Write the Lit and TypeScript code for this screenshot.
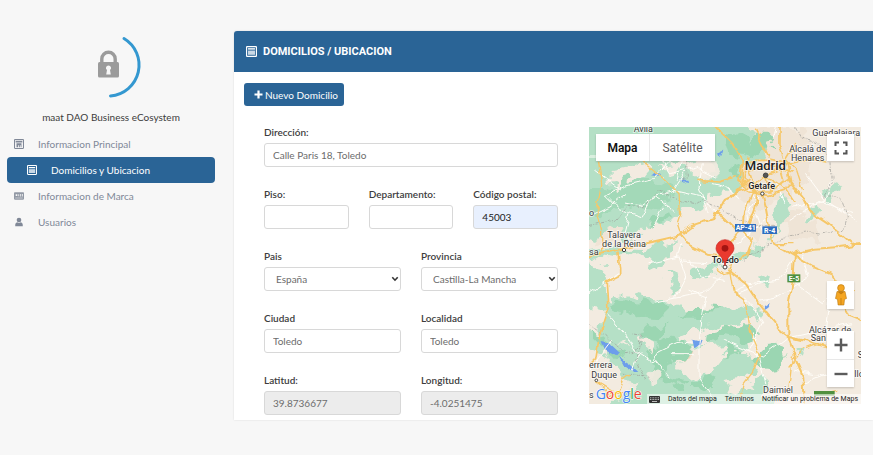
import { LitElement, html, css, svg } from "lit";
import { customElement } from "lit/decorators.js";

const listIcon = svg`<rect x="0.6" y="0.6" width="10.8" height="10.8" rx="1" fill="none" stroke="currentColor" stroke-width="1.3"/><rect x="2.2" y="2.4" width="7.6" height="1.5" fill="currentColor"/><rect x="2.2" y="5" width="7.6" height="4.6" fill="currentColor" opacity=".75"/>`;

const icons: Record<string, unknown> = {
  calendar: svg`<rect x="0.6" y="0.6" width="10.8" height="10.8" rx="1" fill="none" stroke="currentColor" stroke-width="1.3"/><path d="M2 2.2h8v2H2zM3 5h6v5H8V7.500H7V10H6V7.500H5V10H3z" fill="currentColor"/>`,
  list: listIcon,
  card: svg`<rect x="0" y="1.600" width="12" height="8.800" rx="1" fill="currentColor" opacity=".85"/><path d="M2 4h2v2H2zM5.200 4h1v2.400h-1zM7.500 3.500h1v3h-1zM9.500 3.500h1v3h-1zM1.500 8h9v.8h-9z" fill="#f7f7f7"/>`,
  user: svg`<circle cx="6" cy="3.600" r="2.800" fill="currentColor"/><path d="M1.500 11.200V9.400C1.500 7.400 3 6.300 4 6.300c1 .9 3 .9 4 0 1 0 2.500 1.100 2.500 3.100v1.800z" fill="currentColor"/>`,
};

@customElement("side-nav")
class SideNav extends LitElement {
  static styles = css`
    :host { display: block; color: #808897; }
    .brand { display: flex; flex-direction: column; align-items: center; margin: 0; color: #3c3c3c; }
    .logo { width: 68px; height: 68px; display: block; }
    .name { margin: 10px 0 0; line-height: 16px; font-size: 10px; }
    .list { list-style: none; margin: 6px 0 0; padding: 0; }
    .link { display: flex; align-items: center; gap: 14px; height: 26px; padding: 0 7px; border-radius: 4px; color: inherit; text-decoration: none; font-size: 10px; }
    .active { background: #2a6496; color: #fff; padding: 0 20px; }
    .icon { width: 10px; height: 10px; flex: none; }
  `;
  items = [
    { icon: "calendar", text: "Informacion Principal" },
    { icon: "list", text: "Domicilios y Ubicacion", active: true },
    { icon: "card", text: "Informacion de Marca" },
    { icon: "user", text: "Usuarios" },
  ];
  render() {
    return html`
      <div class="brand">
        <svg class="logo" viewBox="0 0 68 68" aria-hidden="true">
          <path d="M47 7.500A31 31 0 0 1 33.500 65" fill="none" stroke="#3498d0" stroke-width="3" stroke-linecap="round"/>
          <path d="M24.800 32v-4a6.700 6.700 0 0 1 13.400 0v4" fill="none" stroke="#9b9b9b" stroke-width="3.400"/>
          <rect x="21" y="31" width="21" height="15.500" rx="1.500" fill="#9b9b9b"/>
          <path d="M31.500 34.400a2.600 2.600 0 0 1 1.500 4.700l.8 4.500h-4.600l.8-4.500a2.600 2.600 0 0 1 1.500-4.700z" fill="#f7f7f7"/>
        </svg>
        <p class="name">maat DAO Business eCosystem</p>
      </div>
      <ul class="list">
        ${this.items.map(
          (i) => html`<li><a href="#" class="link ${i.active ? "active" : ""}">
            <svg class="icon" viewBox="0 0 12 12" aria-hidden="true">${icons[i.icon]}</svg>${i.text}</a></li>`
        )}
      </ul>
    `;
  }
}

@customElement("location-map")
class LocationMap extends LitElement {
  static styles = css`
    :host { display: block; position: relative; font-family: Roboto, "Liberation Sans", sans-serif; color: #333; overflow: hidden; }
    .canvas { display: block; width: 100%; height: 277px; }
    .place { fill: #3a3a3a; stroke: #fff; stroke-opacity: .7; stroke-width: 5px; paint-order: stroke; font-size: 27px; }
    .mid { text-anchor: middle; }
    .big { font-size: 39px; font-weight: 500; fill: #222; }
    .strong { font-weight: 500; fill: #222; }
    .shield { font-size: 21px; font-weight: 700; fill: #fff; text-anchor: middle; }
    .google { font-family: "Open Sans", sans-serif; font-size: 42px; font-weight: 500; stroke: #fff; stroke-width: 3px; paint-order: stroke; }
    button { border: 0; margin: 0; padding: 0; background: #fff; color: #5a5a5a; font-family: inherit; display: flex; align-items: center; justify-content: center; }
    .types, .full, .man, .zoom, .legal { position: absolute; }
    .types { left: 7px; top: 7px; display: flex; height: 27px; box-shadow: 0 1px 2px #0003; }
    .type { font-size: 12px; width: 65px; }
    .selected { font-weight: 600; color: #111; width: 54px; border-right: 1px solid #e8e8e8; }
    .full, .man, .zoom { right: 7px; width: 27px; box-shadow: 0 1px 2px #0003; }
    .full { top: 7px; height: 27px; }
    .man { top: 154px; height: 28px; }
    .zoom { top: 204px; background: #fff; }
    .step { width: 27px; height: 28px; }
    .step + .step { border-top: 1px solid #e8e8e8; }
    .glyph { width: 16px; height: 16px; }
    .person { width: 14px; height: 22px; }
    .legal { right: 0; bottom: 0; display: flex; gap: 8px; align-items: center; height: 10px; padding: 0 3px 0 2px; font-size: 7px; background: #ffffff8c; white-space: nowrap; }
    .legal a { color: #222; text-decoration: none; }
    .keys { width: 11px; height: 7px; }
  `;
  render() {
    return html`
      <svg class="canvas" viewBox="0 0 816 831" preserveAspectRatio="xMidYMid slice" role="img" aria-label="Mapa de Toledo">
        <defs>
          <filter id="coast" x="-5%" y="-5%" width="110%" height="110%"><feTurbulence type="fractalNoise" baseFrequency=".022" numOctaves="3" seed="4"/><feDisplacementMap in="SourceGraphic" scale="64" xChannelSelector="R" yChannelSelector="G"/></filter>
          <filter id="bend" x="-5%" y="-5%" width="110%" height="110%"><feTurbulence type="fractalNoise" baseFrequency=".03" numOctaves="2" seed="9"/><feDisplacementMap in="SourceGraphic" scale="20" xChannelSelector="R" yChannelSelector="G"/></filter>
        </defs>
        <rect width="816" height="831" fill="#f3ebe0"/>
        <g filter="url(#coast)">
        <g fill="#ede0cf">
          <path d="M470 10l60-10h110l30 90-60 120-90 30-80-30-20-110zM560 240l120 40 30 70-90-10zM500 270l30 40-10 40-60-20zM60 260l70 10-30 60-90 20z" opacity=".6"/>
          <path d="M255 670l50 0-4 24-36 8-14-18zM410 185l26-5 8 16-20 18z" fill="#f0d8bd"/>
        </g>
        <g fill="#b5e0c6">
          <path d="M-30 -30H385L400 80 470 110 440 150 470 180 430 210 400 190 350 200 330 260 270 250 250 290 170 290 130 330 80 300 20 330 -30 320z"/>
          <path d="M350-30h110l30 70 60 20-20 40-60 20-40 50-30-30 10-40-40-30z"/>
          <path d="M-30 375l80-15 100 10 120-20-20 35-90 5-40-10-60 25-60-12z"/>
          <path d="M-30 400l70 16 20 40-10 40 20 20-8 50-30-18-62-8z"/>
          <path d="M45 520l60-22 90 20 90 20 60 35 70-42 90 20-30 35-70 15-40-8-60 22-40 10 5 20 80 15 20-35 90-10 20 40-40 32-80-18-70 10-30 40-70-2-90-65-65-20z"/>
          <path d="M-30 600l90 30 60 40 60-10 20 50 60-10 60 20 50 50 40 30 60-20 60 12 40 60H60l60-80-50-80-100-40z"/>
          <path d="M410 690l60-10 40 25-10 40-80 20-30 40 60 50H320l40-100z"/>
          <path d="M300 425l40-10 60-8-20 32-70 20zM230 445l30-8 10 50-30 20zM175 385l40-4 20 24-40 20zM570 195l40 30-20 60-60 80-50 20-60 30 10-25 120-50 10-60zM735 155l30 20-40 50-20-10z"/>
          <path d="M640 240l35-10 5 30-20 16zM500 545l30 5-20 25-15-8zM508 455l24-5 10 20-14 12zM620 675l36-8-8 20zM480 770l50-15 10 30-40 14z"/>
        </g>
        <g fill="#9bd6b2">
          <path d="M410 25l60 5 20 50-30 10-40-10zM480 20l60 0 10 50-40 20-30-20zM425 110l30 4-10 24-24-6z"/>
          <path d="M60 180l60-30 80 0 60 40-50 50-60-10-60 30-70-30zM-20 195l65 0 10 45-30 28-45-6z" opacity=".7"/>
          <path d="M180 280l60-30 15 20-60 30zM60 525l45-15 80 20 60 5-30 30-60-5-60 10zM285 565l20-20 90 5-60 22-70 0zM240 590l-25 20 -10 20 80 15 25 20-20 30-60 15-50-15-10-30 40-10-50-35 20-25z"/>
          <path d="M355 612l60-12 60 5 28 20-50 12-60-6-40 20-20-20zM420 645l40 20-8 25-36 10zM535 660l45-4 10 30-20 40-42 6-18-26-14-6 18-20z"/>
          <path d="M185 675l35 10 20 60 40 15-10 20-70-30zM300 762l60-12 30 15-30 22-60-8zM15 610l70 55 20 35-40-15-50-50zM420 120l24-14 20 20z"/>
        </g>
        <g fill="#f3ebe0">
          <path d="M68 120l80-16 40 14-20 25-50 12-30 35-20-30zM200 115l80-10 70-5 20 45-60 0-20-20-50 15zM275 710l50-20 25 20-10 30-40 15-30-25zM330 660l80-6 12 15-50 15-80-4zM30 340l40 5-10 20-40 0zM150 620l36 20 10 40-30-15z"/>
          <path d="M330 100l40-5 10 50-40 10zM200 725l30 30-20 20-30-25zM90 760l60 10-20 30-50-10z" opacity=".9"/>
        </g>
        </g>
        <g fill="#6d9eeb" filter="url(#bend)">
          <path d="M35 645l25 5 30 28-8 10-40-22zM90 690l32 20 26 25-12 0-34-22zM310 638l16 4 12-4-6 16-16 10zM180 142l16-8 22 8-14 4zM268 158l30 0 2 10-14-2zM528 540l18-12-8 14-12 8zM386 74l14-6-8 20z"/>
        </g>
        <g filter="url(#bend)">
        <g fill="none" stroke="#fffdf8" stroke-width="3" stroke-linejoin="round" stroke-linecap="round">
          <path d="M0 90l50 0 20-30M50 205l60-30 80-20 50-55M50 205l40 40 70 25 30-60 60-15 40-60M120 260l-15 60 20 25M110 225l50 10 40-25 60 45M190 300l30-60M250 190l90 20 40 50M340 110l-10 70 30 80M285 60l-20 100M0 270l60-30 50-40M270 390l20 60-30 60M275 350l-10 40M370 170l40 10 40 35M20 130l80 60M210 80l30 60 80-20 60 30"/>
          <path d="M270 390l-90 20M200 525l150-30 60-60M60 565l50 60 20 40 60 40 20-30 50-25 50-5M300 490l50 20-10 60-10 80 0 100 40 60M280 405l70 5M300 400l40 50 70 10M430 490l50-20 90-10 40-60M440 500l100-40M600 280l90-60 100 40M640 380l20 70-100 60-50 10M620 470l80 60 60-70M610 240l100-20 20-60M560 0l-10 30M0 500l90-60M720 510l-10 90M470 510l50 80-40 80M600 630l-80 60-120-50M250 680l60 0M490 620l40 150M610 630l180-40M620 730l120 20M640 770l100-40M650 140l60 80 90 60M0 730l70-90M150 680l-20 50M200 700l40 50M500 260l20 60M470 230l10 50M540 270l-60 50-40 30"/>
        </g>
        <g fill="none" stroke="#fff" stroke-width="3"><path d="M480 190l20 30-20 30 15 20M510 210l-20 60M560 170l30 60M470 170l40 30"/></g>
        <g fill="none" stroke="#9a9a96" stroke-width="2" stroke-dasharray="9 4 3 4">
          <path d="M0 295l80-15 40-45 50 5 40-50 60 30 50 10 20-10 100 50 60 25 60 0M620 0l15 30 50 20 40 40 5 80-25 40 50 0 20 60-10 40-70 15-40-10-60 10-130 75M0 590l50 35 60 55 30-5 20-50-30-5M160 640l-20 60 30 60M290 60l5 90-20 10M100 745l70 0 20 20"/>
        </g>
        <g fill="none" stroke="#f6c768" stroke-width="4" stroke-linejoin="round" stroke-linecap="round">
          <path d="M38 50l-10 50 10 70-15 80 15 60 0 60M160 105l70 55 40 40 5 60-10 30 10 30"/>
          <path d="M-10 390l110-24 60-15 110-25 40-30 60-20 40-60 50-25" stroke-width="6"/>
          <path d="M275 325l20 25 60 30 40 5M370-10l60 60 30 50 0 60 40 30M375 262l30 8 30 30 50 10" stroke-width="6"/>
          <path d="M90 375l5 50 0 20-40 20 5 80-30 90-10 60-20 20M330 160l60 5 50-15" stroke-width="5"/>
          <path d="M500 10l20 40 20 40M570-10l0 60 15 50M440 200l60-20M455 120l40-20 50 0 50 10 10 60-20 20-50 15-55-10-30-40zM480 130l40-10 55 5 10 35-30 25-60-5zM480 90l-15 60 30 45M600 110l60-15 50 10M590 100l30-50M430 210l50-50M530 145l50-20 30 10M530 145l60 40 25 40M530 145l-50 40M530 145l10 50M450 160l50 35 40 0 60-40" stroke-width="5"/>
          <path d="M495 190l-30 60-5 60-40 40-20 40M505 190l-5 50-30 80 20 20-15 45-30 10M520 200l10 40 10 60 15 50 50 30 60 35 60 25 30 50 40 0M600 160l40 50 20 40 60 40 70 60 36 5M610 380l70-15 70-5 76-10" stroke-width="6"/>
          <path d="M420 430l50 40 40 60 60 75 30 25 60 15 50 15 40 10M615 380l-5 90-12 70 0 90 20 60 25 60 5 80" stroke-width="6"/>
          <path d="M422 430l10 60 35 25 15 100 30 70-20 45-30 40-10 50M385 425l20 15 20-5 5-20M600 720l40-50 50-20M90 800l-30 10M90 790l10-30 20-15M30 770l30 30 70-5M20 760l50 30M610 690l-10 90"/>
          <path d="M770 540l10 25 50 20" stroke-width="6"/>
          <path d="M640 190l-20-60-30-30M490 330l-10 60M555 350l60 0M700 800l40-10"/>
        </g>
        </g>
        <g stroke="#444" stroke-width="3" fill="#fff"><circle cx="105" cy="369" r="5"/><circle cx="520" cy="200" r="5"/><circle cx="22" cy="760" r="4"/><circle cx="530" cy="145" r="7" fill="#555"/><circle cx="408" cy="420" r="6"/></g>
        <g class="place">
          <text x="134" y="14">Avila</text>
          <text class="mid" x="105" y="333">Talavera</text><text class="mid" x="105" y="359">de la Reina</text>
          <text x="0" y="383">sa</text><text x="0" y="268">o</text>
          <text x="670" y="26">Guadalajara</text>
          <text class="mid" x="656" y="76">Alcalá de</text><text class="mid" x="656" y="102">Henares</text>
          <text class="mid big" x="529" y="130">Madrid</text>
          <text class="mid strong" x="518" y="187">Getafe</text>
          <text class="mid strong" x="409" y="408">Toledo</text>
          <text x="660" y="617">Alcázar de</text><text x="665" y="643">San</text>
          <text x="0" y="722">errera</text><text x="7" y="752">Duque</text>
          <text x="522" y="797">Daimiel</text><text x="806" y="694">S</text><text x="796" y="750">llo</text><text x="0" y="813">s</text>
        </g>
        <g><rect x="438" y="291" width="63" height="23" fill="#2f6ec0"/><rect x="520" y="298" width="44" height="23" fill="#2f6ec0"/><rect x="595" y="442" width="39" height="24" fill="#50903f"/><rect x="675" y="792" width="62" height="14" fill="#50903f"/></g>
        <text class="shield" x="470" y="310">AP-41</text><text class="shield" x="542" y="317">R-4</text><text class="shield" x="615" y="462">E-5</text>
        <path d="M408 417c-3-28-27-36-27-53a27 26 0 0 1 54 0c0 17-24 25-27 53z" fill="#ea3a2f" stroke="#c5221f" stroke-width="2"/><circle cx="408" cy="364" r="10" fill="#a31512"/>
        <text class="google" x="20" y="817"><tspan fill="#4285f4">G</tspan><tspan fill="#ea4335">o</tspan><tspan fill="#fbbc05">o</tspan><tspan fill="#4285f4">g</tspan><tspan fill="#34a853">l</tspan><tspan fill="#ea4335">e</tspan></text>
      </svg>
      <div class="types"><button class="type selected">Mapa</button><button class="type">Satélite</button></div>
      <button class="full" aria-label="Pantalla completa"><svg class="glyph" viewBox="0 0 16 16"><path d="M2.500 6V2.500H6M10 2.500h3.500V6M13.500 10v3.500H10M6 13.500H2.500V10" fill="none" stroke="#555" stroke-width="2"/></svg></button>
      <button class="man" aria-label="Street View"><svg class="person" viewBox="0 0 14 22"><circle cx="7" cy="4" r="3.400" fill="#f5a623" stroke="#b9770e" stroke-width=".6"/><path d="M3 7.500h8l1.500 7-2 .8-.6 5.700H4.100l-.6-5.700-2-.8z" fill="#f5a623" stroke="#b9770e" stroke-width=".6"/><path d="M7 14v7M4.500 8h5L7 10z" stroke="#b9770e" stroke-width=".7" fill="#d98b12"/></svg></button>
      <div class="zoom">
        <button class="step" aria-label="Acercar"><svg class="glyph" viewBox="0 0 16 16"><path d="M8 1.500v13M1.500 8h13" stroke="#5c5c5c" stroke-width="2.400"/></svg></button>
        <button class="step" aria-label="Alejar"><svg class="glyph" viewBox="0 0 16 16"><path d="M1.500 8h13" stroke="#5c5c5c" stroke-width="2.400"/></svg></button>
      </div>
      <div class="legal">
        <svg class="keys" viewBox="0 0 11 7"><rect width="11" height="7" rx="1" fill="#333"/><path d="M1 1.800h9M1 3.500h9" stroke="#ddd" stroke-width=".8" stroke-dasharray="1 .6"/><path d="M3 5.500h5" stroke="#ddd" stroke-width=".8"/></svg>
        <a href="#">Datos del mapa</a><a href="#">Términos</a><a href="#">Notificar un problema de Maps</a>
      </div>
    `;
  }
}

interface Field { id: string; label: string; value: string; kind?: string; span: number; }

@customElement("address-form")
class AddressForm extends LitElement {
  static styles = css`
    :host { display: block; }
    .grid { display: grid; grid-template-columns: repeat(6, 1fr); gap: 20px; }
    .field { display: flex; flex-direction: column; gap: 4px; min-width: 0; }
    .s6 { grid-column: span 6; } .s3 { grid-column: span 3; } .s2 { grid-column: span 2; }
    label { font-size: 10px; line-height: 14px; font-weight: 600; color: #3d3d3d; }
    .control { box-sizing: border-box; width: 100%; height: 24px; border: 1px solid #d8d8d8; border-radius: 3px; padding: 0 8px; background: #fff; color: #6c6c6c; font-family: inherit; font-size: 10px; }
    .auto { background: #e8f0fe; color: #222; }
    .readonly { background: #ececec; }
    .select { position: relative; }
    select.control { appearance: none; padding: 0 20px 0 11px; display: block; }
    .arrow { position: absolute; right: 2px; top: 8px; width: 8px; height: 8px; pointer-events: none; }
  `;
  fields: Field[] = [
    { id: "dir", label: "Dirección:", value: "Calle Paris 18, Toledo", span: 6 },
    { id: "piso", label: "Piso:", value: "", span: 2 },
    { id: "dep", label: "Departamento:", value: "", span: 2 },
    { id: "cp", label: "Código postal:", value: "45003", kind: "auto", span: 2 },
    { id: "pais", label: "Pais", value: "España", kind: "select", span: 3 },
    { id: "prov", label: "Provincia", value: "Castilla-La Mancha", kind: "select", span: 3 },
    { id: "ciudad", label: "Ciudad", value: "Toledo", span: 3 },
    { id: "loc", label: "Localidad", value: "Toledo", span: 3 },
    { id: "lat", label: "Latitud:", value: "39.8736677", kind: "readonly", span: 3 },
    { id: "lon", label: "Longitud:", value: "-4.0251475", kind: "readonly", span: 3 },
  ];
  render() {
    return html`<form class="grid">${this.fields.map(
      (f) => html`<div class="field s${f.span}"><label for=${f.id}>${f.label}</label>
        ${f.kind === "select"
          ? html`<div class="select"><select class="control" id=${f.id}><option>${f.value}</option></select>
              <svg class="arrow" viewBox="0 0 8 8" aria-hidden="true"><path d="M1.300 2.300L4 5.200 6.700 2.300" fill="none" stroke="#333" stroke-width="1.600"/></svg></div>`
          : html`<input class="control ${f.kind ?? ""}" id=${f.id} .value=${f.value} ?readonly=${f.kind === "readonly"}>`}
      </div>`
    )}</form>`;
  }
}

@customElement("app-root")
class AppRoot extends LitElement {
  static styles = css`
    :host { display: grid; grid-template-columns: 234px 1fr; box-sizing: border-box; min-height: 100vh; padding: 31px 0 35px; background: #f7f7f7; font-family: Lato, "Liberation Sans", sans-serif; font-size: 10px; }
    .side { padding: 0 19px 0 7px; }
    .panel { background: #fff; border-radius: 3px 0 0 0; box-shadow: 0 0 2px #0002; min-width: 0; padding-bottom: 5px; }
    .head { display: flex; align-items: center; gap: 6px; height: 41px; padding: 0 12px; background: #2a6496; color: #fff; border-radius: 3px 0 0 0; }
    .icon { width: 11px; height: 11px; }
    .title { margin: 0; font-family: Roboto, "Liberation Sans", sans-serif; font-size: 11px; line-height: 16px; font-weight: 700; text-transform: uppercase; }
    .add { display: flex; align-items: center; gap: 2px; margin: 11px 0 0 10px; height: 23px; padding: 0 6px 0 10px; border: 0; border-radius: 3px; background: #2a6496; color: #fff; font-family: inherit; font-size: 10px; }
    .plus { width: 9px; height: 9px; }
    .body { display: grid; grid-template-columns: 294fr 272fr; gap: 31px; align-items: start; padding: 19px 12px 0 30px; }
    .map { margin-top: 2px; }
  `;
  render() {
    return html`
      <side-nav class="side"></side-nav>
      <main class="panel">
        <header class="head"><svg class="icon" viewBox="0 0 12 12" aria-hidden="true">${listIcon}</svg><h1 class="title">Domicilios / Ubicacion</h1></header>
        <button class="add"><svg class="plus" viewBox="0 0 9 9" aria-hidden="true"><path d="M4.500 .5v8M.5 4.500h8" stroke="#fff" stroke-width="2.200"/></svg>Nuevo Domicilio</button>
        <div class="body"><address-form></address-form><location-map class="map"></location-map></div>
      </main>
    `;
  }
}
